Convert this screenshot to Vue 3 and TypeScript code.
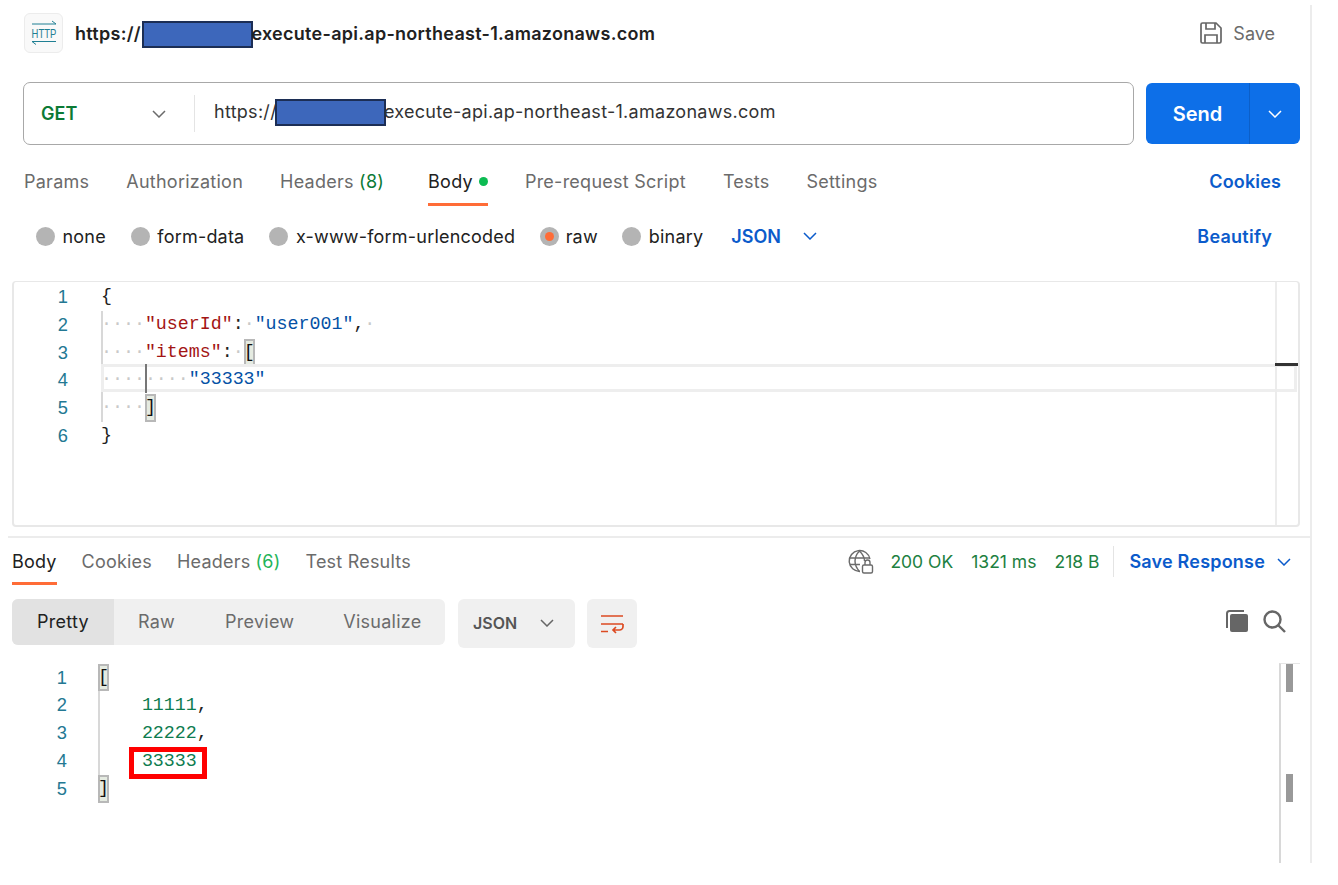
<script setup lang="ts">
interface Tok { t: string; c: string }
const req: Tok[][] = [
  [{ t: '{', c: 'p' }],
  [{ t: '····', c: 'ws' }, { t: '"userId"', c: 'k' }, { t: ':', c: 'p' }, { t: '·', c: 'ws' }, { t: '"user001"', c: 's' }, { t: ',', c: 'p' }, { t: '·', c: 'ws' }],
  [{ t: '····', c: 'ws' }, { t: '"items"', c: 'k' }, { t: ':', c: 'p' }, { t: '·', c: 'ws' }, { t: '[', c: 'b' }],
  [{ t: '········', c: 'ws' }, { t: '"33333"', c: 's' }],
  [{ t: '····', c: 'ws' }, { t: ']', c: 'b' }],
  [{ t: '}', c: 'p' }],
]
const res: Tok[][] = [
  [{ t: '[', c: 'b' }],
  [{ t: '    ', c: 'p' }, { t: '11111', c: 'n' }, { t: ',', c: 'p' }],
  [{ t: '    ', c: 'p' }, { t: '22222', c: 'n' }, { t: ',', c: 'p' }],
  [{ t: '    ', c: 'p' }, { t: '33333', c: 'n' }],
  [{ t: ']', c: 'b' }],
]
const radios = [
  { label: 'none', on: false },
  { label: 'form-data', on: false },
  { label: 'x-www-form-urlencoded', on: false },
  { label: 'raw', on: true },
  { label: 'binary', on: false },
]
</script>

<template>
  <div class="main">
    <header class="head">
      <div class="http-icon">
        <svg width="26" height="28" viewBox="0 0 26 28" fill="none" stroke="#1f7f93" stroke-width="1">
          <path d="M1 5h24M21 2l4 3M1 22.500h24M1 22.500l4 3" />
          <text x="13" y="14.100" text-anchor="middle" transform="scale(1 1.350)" class="http-text">HTTP</text>
        </svg>
      </div>
      <h1 class="title">https://<span class="redact"></span>execute-api.ap-northeast-1.amazonaws.com</h1>
      <div class="save">
        <svg width="24" height="24" viewBox="0 0 24 24" fill="none" stroke="#666" stroke-width="1.700">
          <path d="M2 3.500a1.500 1.500 0 0 1 1.500-1.500H17l5 5v13.500a1.500 1.500 0 0 1-1.500 1.500H3.500A1.500 1.500 0 0 1 2 20.500z" />
          <path d="M7 2v6h9V2M6 22v-8h12v8" />
        </svg>
        <span>Save</span>
      </div>
    </header>

    <div class="url-row">
      <div class="url-box">
        <div class="method">
          <span>GET</span>
          <svg width="14" height="8" viewBox="0 0 14 8" fill="none" stroke="#6b6b6b" stroke-width="1.500"><path d="M1 1l6 6 6-6" /></svg>
        </div>
        <div class="url">https://<span class="redact"></span>execute-api.ap-northeast-1.amazonaws.com</div>
      </div>
      <div class="send">
        <span class="send-label">Send</span>
        <span class="send-more">
          <svg width="14" height="8" viewBox="0 0 14 8" fill="none" stroke="#fff" stroke-width="1.500"><path d="M1 1l6 6 6-6" /></svg>
        </span>
      </div>
    </div>

    <nav class="tabs">
      <span class="tab">Params</span>
      <span class="tab">Authorization</span>
      <span class="tab">Headers <em class="count">(8)</em></span>
      <span class="tab active body-tab">Body<i class="dot"></i></span>
      <span class="tab">Pre-request Script</span>
      <span class="tab">Tests</span>
      <span class="tab">Settings</span>
      <span class="link cookies">Cookies</span>
    </nav>

    <div class="options">
      <label v-for="r in radios" :key="r.label" class="radio">
        <i class="circle" :class="{ on: r.on }"></i>{{ r.label }}
      </label>
      <span class="link json">JSON
        <svg width="14" height="8" viewBox="0 0 14 8" fill="none" stroke="#0b5bcb" stroke-width="1.500"><path d="M1 1l6 6 6-6" /></svg>
      </span>
      <span class="link beautify">Beautify</span>
    </div>

    <section class="editor">
      <div class="mini"><i class="mark"></i></div>
      <div v-for="(line, i) in req" :key="i" class="line">
        <span class="ln">{{ i + 1 }}</span>
        <span class="code" :class="{ guide: i >= 1 && i <= 4, current: i === 3 }">
          <i v-if="i === 3" class="caret"></i>
          <span v-for="(tok, j) in line" :key="j" :class="tok.c">{{ tok.t }}</span>
        </span>
      </div>
    </section>

    <section class="response">
      <div class="res-head">
        <span class="tab active">Body</span>
        <span class="tab">Cookies</span>
        <span class="tab">Headers <em class="count light">(6)</em></span>
        <span class="tab">Test Results</span>
        <div class="status">
          <svg class="globe" width="28" height="26" viewBox="0 0 28 26" fill="none" stroke="#6b6b6b" stroke-width="1.400">
            <path d="M13 22.500A10.500 10.500 0 1 1 23 10" />
            <path d="M2.500 9h20M3 15.500h10M12.500 2c-6 6-6 14 0 20.500M12.500 2c3.500 3.500 5 7 5 10" />
            <rect x="15.500" y="16" width="10" height="8" rx="1.500" />
            <path d="M18 16v-2.500a2.500 2.500 0 0 1 5 0V16" />
          </svg>
          <span>200 OK</span>
          <span>1321 ms</span>
          <span>218 B</span>
        </div>
        <span class="link save-res">Save Response
          <svg width="14" height="8" viewBox="0 0 14 8" fill="none" stroke="#0b5bcb" stroke-width="1.500"><path d="M1 1l6 6 6-6" /></svg>
        </span>
      </div>

      <div class="toolbar">
        <div class="segmented">
          <span class="seg pretty">Pretty</span>
          <span class="seg raw">Raw</span>
          <span class="seg preview">Preview</span>
          <span class="seg visualize">Visualize</span>
        </div>
        <div class="format">JSON
          <svg width="14" height="8" viewBox="0 0 14 8" fill="none" stroke="#666" stroke-width="1.500"><path d="M1 1l6 6 6-6" /></svg>
        </div>
        <div class="wrap">
          <svg width="24" height="20" viewBox="0 0 24 20" fill="none" stroke="#dc4a22" stroke-width="1.700">
            <path d="M1 2h22M1 10h22M1 17.500h7" />
            <path d="M23 10v2.500a3.500 3.500 0 0 1-3.500 3.500H13M16 13l-3 3 3 3" />
          </svg>
        </div>
        <div class="tools">
          <svg width="24" height="24" viewBox="0 0 24 24" fill="#666">
            <path d="M1 4.500A3.500 3.500 0 0 1 4.500 1H19v2H4.500A1.500 1.500 0 0 0 3 4.500V19H1z" />
            <rect x="5" y="5" width="18" height="18" rx="2" />
          </svg>
          <svg width="24" height="24" viewBox="0 0 24 24" fill="none" stroke="#666" stroke-width="2.400">
            <circle cx="10.500" cy="10.500" r="8" />
            <path d="M16.500 16.500 23 23" />
          </svg>
        </div>
      </div>

      <div class="res-code">
        <div class="res-lines">
          <div v-for="(line, i) in res" :key="i" class="line">
            <span class="ln">{{ i + 1 }}</span>
            <span class="code res-guide">
              <span v-for="(tok, j) in line" :key="j" :class="tok.c">{{ tok.t }}</span>
              <i v-if="i === 3" class="callout"></i>
            </span>
          </div>
        </div>
        <div class="res-mini"><i class="thumb"></i><i class="thumb low"></i></div>
      </div>
    </section>
  </div>
</template>

<style scoped>
.main {
  box-sizing: border-box;
  width: 1312px;
  height: 858px;
  margin-top: 5px;
  border-right: 2px solid #ececec;
  font-family: Inter, "Liberation Sans", sans-serif;
  font-size: 18px;
  color: #212121;
}
.head {
  height: 56px;
  padding-left: 24px;
  display: flex;
  align-items: center;
}
.http-icon {
  box-sizing: border-box;
  width: 39px;
  height: 40px;
  border: 1.500px solid #ececec;
  border-radius: 6px;
  background: #f9f9f9;
  display: flex;
  align-items: center;
  justify-content: center;
}
.http-text {
  font-family: "Liberation Sans", sans-serif;
  font-size: 9.500px;
  fill: #1f7f93;
  stroke: none;
}
.title {
  margin: 2px 0 0 12px;
  font-size: 18px;
  font-weight: 600;
  line-height: 28px;
  letter-spacing: 0.28px;
}
.title .redact {
  margin-left: 1.500px;
}
.redact {
  display: inline-block;
  box-sizing: border-box;
  width: 111px;
  height: 27px;
  margin: 0 -2px 0 0;
  vertical-align: -8px;
  background: #3d67bb;
  border: 2px solid #1c2e55;
}
.save {
  margin-left: auto;
  margin-right: 35px;
  display: flex;
  align-items: center;
  gap: 10px;
  color: #6b6b6b;
}
.url-row {
  margin-top: 21px;
  padding: 0 10px 0 23px;
  display: flex;
  gap: 12px;
}
.url-box {
  box-sizing: border-box;
  flex: 1;
  height: 63px;
  border: 1.500px solid #a8a8a8;
  border-radius: 7px;
  display: flex;
  align-items: center;
}
.method {
  box-sizing: border-box;
  width: 171px;
  height: 37px;
  padding: 0 28px 0 17px;
  border-right: 1.500px solid #e4e4e4;
  display: flex;
  align-items: center;
  justify-content: space-between;
  color: #0b7a35;
  font-weight: 600;
}
.url {
  margin-left: 19px;
  margin-top: -4px;
  color: #333;
  line-height: 28px;
  letter-spacing: 0.28px;
}
.url .redact {
  margin-left: -2px;
}
.send {
  width: 154px;
  height: 61px;
  margin-top: 1px;
  border-radius: 6px;
  background: #0d6fe8;
  color: #fff;
  display: flex;
  align-items: stretch;
}
.send-label {
  width: 103px;
  display: flex;
  align-items: center;
  justify-content: center;
  font-size: 20px;
  font-weight: 600;
  border-right: 1px solid #0b5fc9;
}
.send-more {
  flex: 1;
  display: flex;
  align-items: center;
  justify-content: center;
}
.tabs {
  height: 61px;
  padding-left: 24px;
  padding-right: 29px;
  display: flex;
  gap: 37px;
}
.tab {
  display: flex;
  align-items: center;
  white-space: pre;
  color: #6b6b6b;
  height: 100%;
  box-sizing: border-box;
  padding-top: 14px;
  border-bottom: 3px solid transparent;
  letter-spacing: 0.25px;
}
.tab.active {
  color: #212121;
  border-bottom-color: #ff6c37;
}
.body-tab {
  margin-left: 7px;
}
.count {
  font-style: normal;
  color: #0b7a35;
}
.count.light {
  color: #1fb45a;
}
.dot {
  width: 9px;
  height: 9px;
  margin-left: 6px;
  border-radius: 50%;
  background: #0cbb52;
}
.link {
  color: #0b5bcb;
  font-weight: 600;
}
.cookies {
  margin-left: auto;
  align-self: center;
  padding-top: 11px;
  letter-spacing: 0.15px;
}
.options {
  height: 60px;
  padding: 0 38px 0 36px;
  display: flex;
  align-items: center;
}
.radio {
  display: flex;
  align-items: center;
  gap: 7.500px;
  margin-right: 25px;
  color: #212121;
  letter-spacing: 0.2px;
}
.radio:nth-child(4) {
  gap: 6.500px;
  margin-right: 24.500px;
}
.circle {
  box-sizing: border-box;
  width: 19px;
  height: 19px;
  border-radius: 50%;
  background: #b4b4b4;
  display: flex;
  align-items: center;
  justify-content: center;
}
.circle.on::after {
  content: "";
  width: 9px;
  height: 9px;
  border-radius: 50%;
  background: #ff6c37;
}
.json {
  margin-left: 3px;
  display: flex;
  align-items: center;
  gap: 22px;
}
.beautify {
  margin-left: auto;
  letter-spacing: 0.25px;
}
.editor {
  position: relative;
  box-sizing: border-box;
  width: 1288px;
  height: 246px;
  margin: 15px 0 0 12px;
  padding-top: 1px;
  border: 2px solid #e8e8e8;
  border-top-width: 1px;
  border-radius: 4px;
}
.mini {
  position: absolute;
  z-index: 1;
  top: 0;
  bottom: 0;
  right: 0;
  width: 21px;
  border-left: 2px solid #ececec;
}
.mark {
  position: absolute;
  left: -2px;
  right: 0;
  top: 81px;
  height: 3px;
  background: #333;
}
.line {
  height: 27.800px;
  display: flex;
  font-family: "Liberation Mono", monospace;
  font-size: 18.300px;
  line-height: 27.800px;
  white-space: pre;
}
.ln {
  flex: none;
  width: 54px;
  text-align: right;
  color: #237893;
  font-family: "Liberation Sans", sans-serif;
}
.code {
  position: relative;
  flex: 1;
  margin-left: 33px;
  margin-right: 1px;
  color: #212121;
}
.guide {
  box-shadow: inset 2px 0 0 #d8d8d8;
}
.current::before {
  content: "";
  position: absolute;
  inset: -2px 0 2px;
  border: 3px solid #eeeeee;
}
.caret {
  position: absolute;
  left: 44px;
  top: -2px;
  width: 2px;
  height: 29px;
  background: #777;
}
.ws {
  color: #c9c9c9;
}
.k {
  color: #a31515;
}
.s {
  color: #0451a5;
}
.n {
  color: #0e7c4f;
}
.p {
  color: #212121;
}
.b {
  display: inline-block;
  height: 27.800px;
  background: #e5ebe1;
  box-shadow: inset 0 0 0 2px #b8b8b8;
  color: #111;
}
.response {
  margin-top: 9px;
}
.res-head {
  box-sizing: border-box;
  height: 49px;
  margin-left: 8px;
  padding: 0 19px 0 4px;
  border-top: 2px solid #ececec;
  display: flex;
  gap: 25px;
}
.res-head .tab {
  padding-top: 2px;
  letter-spacing: 0.2px;
}
.status {
  margin-left: auto;
  display: flex;
  align-items: center;
  gap: 18px;
  color: #20803f;
  font-size: 17.500px;
}
.globe {
  margin-right: -3px;
}
.save-res {
  margin-left: -11px;
  align-self: center;
  padding-left: 15px;
  border-left: 1.500px solid #e4e4e4;
  line-height: 31px;
  letter-spacing: 0.2px;
  display: flex;
  align-items: center;
  gap: 12px;
}
.toolbar {
  margin: 14px 24px 0 12px;
  display: flex;
  align-items: flex-start;
}
.segmented {
  width: 433px;
  height: 46px;
  border-radius: 6px;
  overflow: hidden;
  background: #f0f0f0;
  display: flex;
  color: #6b6b6b;
  letter-spacing: 0.25px;
}
.seg {
  display: flex;
  align-items: center;
  padding-bottom: 2px;
  box-sizing: border-box;
}
.pretty {
  width: 102px;
  justify-content: center;
  background: #e2e2e2;
  color: #212121;
}
.raw {
  margin-left: 24px;
}
.preview {
  margin-left: 50px;
}
.visualize {
  margin-left: 49px;
}
.format {
  box-sizing: border-box;
  width: 117px;
  height: 49px;
  margin-left: 13px;
  padding: 0 21px 2px 15px;
  border-radius: 6px;
  background: #f0f0f0;
  color: #555;
  font-size: 16px;
  font-weight: 600;
  display: flex;
  align-items: center;
  justify-content: space-between;
}
.wrap {
  width: 50px;
  height: 49px;
  margin-left: 12px;
  border-radius: 6px;
  background: #f0f0f0;
  display: flex;
  align-items: center;
  justify-content: center;
}
.tools {
  margin-left: auto;
  margin-top: 10px;
  display: flex;
  gap: 13px;
}
.res-code {
  margin-top: 15px;
  display: flex;
}
.res-lines {
  flex: 1;
  padding: 0.600px 0 0 13px;
}
.res-guide {
  margin-left: 31px;
  box-shadow: inset 2px 0 0 #d8d8d8;
}
.res-guide .n,
.res-guide .p {
  position: relative;
  top: 1px;
}
.callout {
  position: absolute;
  left: 31px;
  top: 0;
  box-sizing: border-box;
  width: 78px;
  height: 32px;
  border: 5px solid #f00;
}
.res-mini {
  position: relative;
  box-sizing: border-box;
  flex: none;
  width: 21px;
  height: 200px;
  margin-right: 10px;
  border-left: 2px solid #d8d8d8;
  border-top: 1px solid #e6e6e6;
}
.thumb {
  position: absolute;
  left: 5px;
  top: 0;
  width: 7px;
  height: 28px;
  background: #999;
}
.thumb.low {
  top: 110px;
}
</style>

<style>
html,
body {
  margin: 0;
  background: #fff;
  overflow: hidden;
}
</style>
